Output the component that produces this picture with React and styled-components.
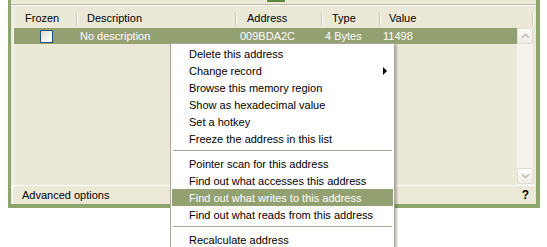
import React from 'react'
import styled, { createGlobalStyle } from 'styled-components'

const olive = '#93a070'
const beige = '#ece9d8'
const frame = '#8fa56e'

const GlobalStyle = createGlobalStyle`
  html, body { margin: 0; padding: 0; background: #fff; }
  body {
    font-family: "Liberation Sans", Arial, sans-serif;
    font-size: 11px;
    color: #000;
  }
`

const Page = styled.div`
  position: relative;
  width: 547px;
  height: 247px;
  overflow: hidden;
`

const Window = styled.div`
  box-sizing: border-box;
  margin-left: 8px;
  width: 532px;
  height: 208px;
  display: flex;
  flex-direction: column;
  background: ${beige};
  border-left: 3px solid ${frame};
  border-right: 4px solid ${frame};
  border-bottom: 4px solid ${frame};
`

const TopStrip = styled.div`
  height: 4px;
  display: flex;
  padding-left: 256px;
  border-bottom: 1px solid #bcb8a2;
  box-shadow: 0 1px 0 #fff;
  margin-bottom: 2px;
`

const StubButton = styled.div`
  width: 18px;
  height: 2px;
  background: #5d8a3a;
`

const ListBox = styled.div`
  flex: 1;
  min-height: 0;
  margin: 0 2px;
  display: flex;
  flex-direction: column;
  border-left: 1px solid #f7f6ef;
  background: #ebe8d7;
`

const HeaderRow = styled.div`
  height: 21px;
  display: flex;
  align-items: center;
`

const HeaderCell = styled.div`
  box-sizing: border-box;
  width: ${p => p.$w}px;
  padding-left: ${p => p.$pad}px;
  padding-top: 1px;
  white-space: nowrap;
`

const Sep = styled.div`
  box-sizing: border-box;
  width: 2px;
  height: 14px;
  margin-top: 2px;
  border-left: 1px solid #c9c6b3;
  border-right: 1px solid #fff;
`

const Body = styled.div`
  flex: 1;
  min-height: 0;
  display: flex;
`

const Rows = styled.div`
  flex: 1;
  display: flex;
  flex-direction: column;
`

const Row = styled.div`
  height: 16px;
  display: flex;
  align-items: center;
  background: ${p => (p.$selected ? olive : 'transparent')};
  color: ${p => (p.$selected ? '#fff' : '#000')};
`

const RowCell = styled.div`
  box-sizing: border-box;
  width: ${p => (p.$w ? `${p.$w}px` : 'auto')};
  flex: ${p => (p.$w ? 'none' : 1)};
  padding-left: ${p => p.$pad || 0}px;
  display: flex;
  justify-content: ${p => (p.$center ? 'center' : 'flex-start')};
  white-space: nowrap;
`

const Check = styled.div`
  box-sizing: border-box;
  width: 13px;
  height: 13px;
  border: 1px solid #1c5180;
  background: linear-gradient(135deg, #dcdcd5 0%, #f4f4f0 60%, #fff 100%);
`

const Scrollbar = styled.div`
  width: 16px;
  margin-right: 1px;
  display: flex;
  flex-direction: column;
  justify-content: space-between;
  background: #f5f4ec;
  padding-bottom: 1px;
`

const ScrollButton = styled.div`
  box-sizing: border-box;
  width: 16px;
  height: 16px;
  border: 1px solid #e1dfd3;
  border-radius: 2px;
  background: linear-gradient(#fdfdfa, #eeede3);
  display: flex;
  align-items: center;
  justify-content: center;
`

const BottomBar = styled.div`
  box-sizing: border-box;
  height: 19px;
  margin-left: 1px;
  padding: 0 7px 0 9px;
  display: flex;
  align-items: center;
  justify-content: space-between;
  border-top: 1px solid #fff;
  border-left: 1px solid #fff;
`

const Help = styled.span`
  font-weight: bold;
  font-size: 12px;
`

const Menu = styled.div`
  position: absolute;
  left: 170px;
  top: 43px;
  width: 225px;
  box-sizing: border-box;
  padding: 1px;
  background: #fff;
  border: 1px solid #aca899;
  box-shadow: 2px 2px 2px rgba(0, 0, 0, 0.25);
`

const MenuItem = styled.div`
  height: 17px;
  display: flex;
  align-items: center;
  justify-content: space-between;
  padding: 0 6px 0 17px;
  white-space: nowrap;
  background: ${p => (p.$active ? olive : 'transparent')};
  color: ${p => (p.$active ? '#fff' : '#000')};
`

const SubArrow = styled.span`
  width: 0;
  height: 0;
  border-left: 4px solid #000;
  border-top: 4px solid transparent;
  border-bottom: 4px solid transparent;
`

const MenuSep = styled.div`
  height: 1px;
  margin: 3px 1px 4px;
  background: #aca899;
`

function Chevron({ down }) {
  return (
    <svg width="9" height="6" viewBox="0 0 9 6">
      <path
        d={down ? 'M1 1.5 L4.5 4.5 L8 1.5' : 'M1 4.5 L4.5 1.5 L8 4.5'}
        fill="none"
        stroke="#c6c5bb"
        strokeWidth="1.8"
      />
    </svg>
  )
}

const columns = [
  { label: 'Frozen', w: 62, pad: 11 },
  { label: 'Description', w: 157, pad: 9 },
  { label: 'Address', w: 84, pad: 10 },
  { label: 'Type', w: 56, pad: 9 },
  { label: 'Value', w: 151, pad: 8 },
]

const menu = [
  { label: 'Delete this address' },
  { label: 'Change record', sub: true },
  { label: 'Browse this memory region' },
  { label: 'Show as hexadecimal value' },
  { label: 'Set a hotkey' },
  { label: 'Freeze the address in this list' },
  { sep: true },
  { label: 'Pointer scan for this address' },
  { label: 'Find out what accesses this address' },
  { label: 'Find out what writes to this address', active: true },
  { label: 'Find out what reads from this address' },
  { sep: true },
  { label: 'Recalculate address' },
]

export default function App() {
  return (
    <Page>
      <GlobalStyle />
      <Window>
        <TopStrip>
          <StubButton />
        </TopStrip>
        <ListBox>
          <HeaderRow>
            {columns.map(c => (
              <React.Fragment key={c.label}>
                <HeaderCell $w={c.w} $pad={c.pad}>{c.label}</HeaderCell>
                <Sep />
              </React.Fragment>
            ))}
          </HeaderRow>
          <Body>
            <Rows>
              <Row $selected>
                <RowCell $w={64} $center><Check /></RowCell>
                <RowCell $w={159} $pad={2}>No description</RowCell>
                <RowCell $w={86} $pad={3}>009BDA2C</RowCell>
                <RowCell $w={58} $pad={2}>4 Bytes</RowCell>
                <RowCell $pad={2}>11498</RowCell>
              </Row>
            </Rows>
            <Scrollbar>
              <ScrollButton><Chevron /></ScrollButton>
              <ScrollButton><Chevron down /></ScrollButton>
            </Scrollbar>
          </Body>
        </ListBox>
        <BottomBar>
          <span>Advanced options</span>
          <Help>?</Help>
        </BottomBar>
      </Window>
      <Menu>
        {menu.map((m, i) =>
          m.sep ? (
            <MenuSep key={i} />
          ) : (
            <MenuItem key={i} $active={m.active}>
              <span>{m.label}</span>
              {m.sub && <SubArrow />}
            </MenuItem>
          )
        )}
      </Menu>
    </Page>
  )
}
